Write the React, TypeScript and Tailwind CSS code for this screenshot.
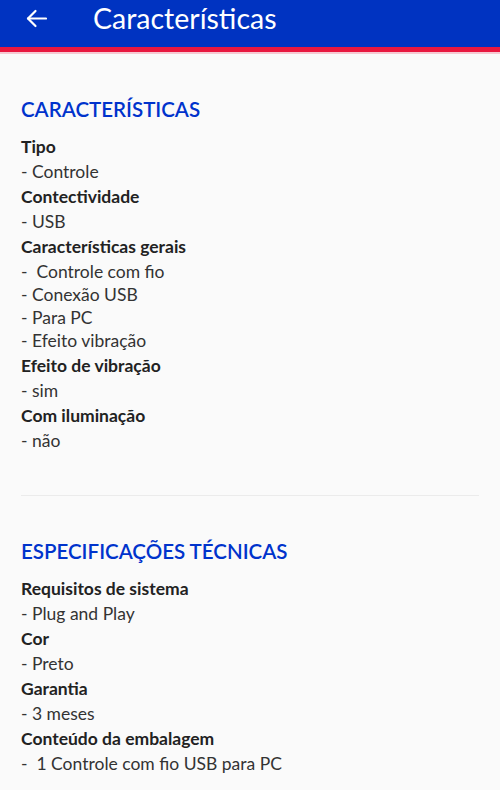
import React from "react";

interface Spec {
  label: string;
  values: string[];
}

interface Section {
  title: string;
  items: Spec[];
}

const sections: Section[] = [
  {
    title: "CARACTERÍSTICAS",
    items: [
      { label: "Tipo", values: ["- Controle"] },
      { label: "Contectividade", values: ["- USB"] },
      {
        label: "Características gerais",
        values: ["-  Controle com fio", "- Conexão USB", "- Para PC", "- Efeito vibração"],
      },
      { label: "Efeito de vibração", values: ["- sim"] },
      { label: "Com iluminação", values: ["- não"] },
    ],
  },
  {
    title: "ESPECIFICAÇÕES TÉCNICAS",
    items: [
      { label: "Requisitos de sistema", values: ["- Plug and Play"] },
      { label: "Cor", values: ["- Preto"] },
      { label: "Garantia", values: ["- 3 meses"] },
      { label: "Conteúdo da embalagem", values: ["-  1 Controle com fio USB para PC"] },
    ],
  },
];

const App: React.FC = () => {
  return (
    <div
      className="w-[500px] h-[790px] overflow-hidden bg-[#fafafa]"
      style={{ fontFamily: "Lato, 'Open Sans', sans-serif" }}
    >
      {/* Top bar */}
      <header className="h-[52px] bg-[#0033c1] border-b-[5px] border-[#e8173f] flex items-center pb-[11px]">
        <button className="w-[74px] flex items-center pl-[26px] text-white">
          <svg width="21" height="19" viewBox="0 0 21 19" fill="none" stroke="currentColor" strokeWidth="2.2" strokeLinecap="round" strokeLinejoin="round">
            <path d="M20 9.5H2" />
            <path d="M9.5 2L2 9.5 9.5 17" />
          </svg>
        </button>
        <h1 className="text-white text-[28.5px] leading-none ml-[19px]">Características</h1>
      </header>
      <div className="h-[2px] bg-[#f6c9d2]" />

      {/* Content */}
      <main className="px-[21px]">
        {sections.map((section, i) => (
          <section
            key={section.title}
            className={`pt-[41px] pb-[41px] ${i < sections.length - 1 ? "border-b border-[#ebebeb]" : ""}`}
          >
            <h2 className="text-[#0033cc] text-[20.5px] leading-[28px] font-semibold mb-[12px]">
              {section.title}
            </h2>
            {section.items.map((item) => (
              <div key={item.label}>
                <div className="text-[17.5px] leading-[23px] mb-[2px] font-bold text-[#222222]">
                  {item.label}
                </div>
                <div className="text-[17.5px] leading-[23px] mb-[2px] text-[#333333] whitespace-pre">
                  {item.values.join("\n")}
                </div>
              </div>
            ))}
          </section>
        ))}
      </main>
    </div>
  );
};

export default App;
